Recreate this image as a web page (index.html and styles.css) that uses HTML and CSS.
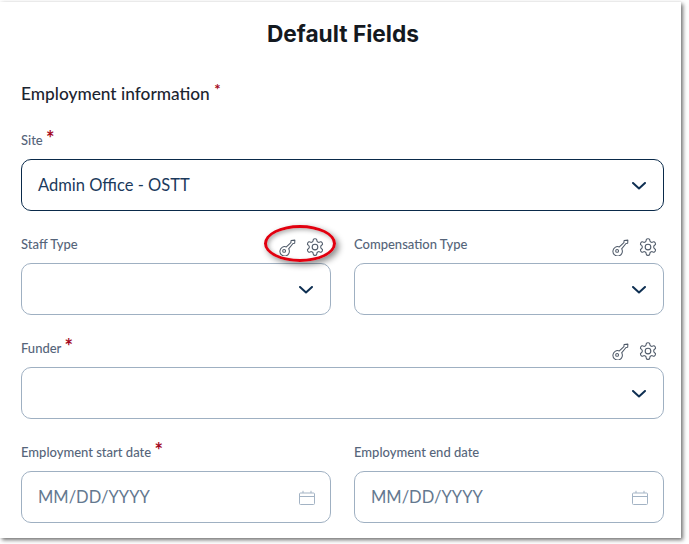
FILE: index.html
```html
<!DOCTYPE html>
<html lang="en">
<head>
    <meta charset="UTF-8">
    <meta name="viewport" content="width=device-width, initial-scale=1.0">
    <title>Default Fields</title>
    <link rel="stylesheet" href="styles.css">
</head>
<body>

<svg class="icon-defs" width="0" height="0">
    <symbol id="icon-key" viewBox="0 0 18 18">
        <path d="M7.8 8.4 12.6 3.8 12.8 1.6 16.8 1.2 16.6 4.6 14.8 4.8 10.2 10.4A5 5 0 1 1 7.8 8.4Z" fill="none" stroke="currentColor" stroke-width="1.1" stroke-linejoin="round"/>
        <circle cx="5.4" cy="12.6" r="1.5" fill="none" stroke="currentColor" stroke-width="1.1"/>
    </symbol>
    <symbol id="icon-gear" viewBox="0 0 24 24">
        <path d="M12.22 2h-.44a2 2 0 0 0-2 2v.18a2 2 0 0 1-1 1.73l-.43.25a2 2 0 0 1-2 0l-.15-.08a2 2 0 0 0-2.73.73l-.22.38a2 2 0 0 0 .73 2.73l.15.1a2 2 0 0 1 1 1.72v.51a2 2 0 0 1-1 1.74l-.15.09a2 2 0 0 0-.73 2.73l.22.38a2 2 0 0 0 2.73.73l.15-.08a2 2 0 0 1 2 0l.43.25a2 2 0 0 1 1 1.73V20a2 2 0 0 0 2 2h.44a2 2 0 0 0 2-2v-.18a2 2 0 0 1 1-1.73l.43-.25a2 2 0 0 1 2 0l.15.08a2 2 0 0 0 2.73-.73l.22-.39a2 2 0 0 0-.73-2.73l-.15-.08a2 2 0 0 1-1-1.74v-.5a2 2 0 0 1 1-1.74l.15-.09a2 2 0 0 0 .73-2.73l-.22-.38a2 2 0 0 0-2.73-.73l-.15.08a2 2 0 0 1-2 0l-.43-.25a2 2 0 0 1-1-1.73V4a2 2 0 0 0-2-2z" fill="none" stroke="currentColor" stroke-width="1.3"/>
        <circle cx="12" cy="12" r="3.4" fill="none" stroke="currentColor" stroke-width="1.3"/>
    </symbol>
    <symbol id="icon-chevron" viewBox="0 0 14 8">
        <path d="M1 1 7 6.5 13 1" fill="none" stroke="currentColor" stroke-width="2" stroke-linecap="round" stroke-linejoin="round"/>
    </symbol>
    <symbol id="icon-calendar" viewBox="0 0 16 15">
        <path d="M1.5 3h13a1 1 0 0 1 1 1v9.5a1 1 0 0 1-1 1h-13a1 1 0 0 1-1-1V4a1 1 0 0 1 1-1ZM.5 6.5h15M4 .8V3M12 .8V3" fill="none" stroke="currentColor" stroke-width="1"/>
    </symbol>
</svg>

<div class="sheet">
    <h1 class="page-title">Default Fields</h1>
    <h2 class="section-title">Employment information <span class="req req-small">*</span></h2>

    <div class="field-grid">
        <div class="field field-wide">
            <div class="field-head">
                <label class="field-label">Site <span class="req">*</span></label>
            </div>
            <div class="control control-active">
                <span class="control-value">Admin Office - OSTT</span>
                <svg class="chevron"><use href="#icon-chevron"/></svg>
            </div>
        </div>

        <div class="field">
            <div class="field-head">
                <label class="field-label">Staff Type</label>
                <div class="field-tools">
                    <svg class="tool"><use href="#icon-key"/></svg>
                    <svg class="tool tool-gear"><use href="#icon-gear"/></svg>
                    <div class="callout"></div>
                </div>
            </div>
            <div class="control">
                <svg class="chevron"><use href="#icon-chevron"/></svg>
            </div>
        </div>

        <div class="field">
            <div class="field-head">
                <label class="field-label">Compensation Type</label>
                <div class="field-tools">
                    <svg class="tool"><use href="#icon-key"/></svg>
                    <svg class="tool tool-gear"><use href="#icon-gear"/></svg>
                </div>
            </div>
            <div class="control">
                <svg class="chevron"><use href="#icon-chevron"/></svg>
            </div>
        </div>

        <div class="field field-wide">
            <div class="field-head">
                <label class="field-label">Funder <span class="req">*</span></label>
                <div class="field-tools">
                    <svg class="tool"><use href="#icon-key"/></svg>
                    <svg class="tool tool-gear"><use href="#icon-gear"/></svg>
                </div>
            </div>
            <div class="control">
                <svg class="chevron"><use href="#icon-chevron"/></svg>
            </div>
        </div>

        <div class="field">
            <div class="field-head">
                <label class="field-label">Employment start date <span class="req">*</span></label>
            </div>
            <div class="control">
                <span class="control-placeholder">MM/DD/YYYY</span>
                <svg class="calendar"><use href="#icon-calendar"/></svg>
            </div>
        </div>

        <div class="field">
            <div class="field-head">
                <label class="field-label">Employment end date</label>
            </div>
            <div class="control">
                <span class="control-placeholder">MM/DD/YYYY</span>
                <svg class="calendar"><use href="#icon-calendar"/></svg>
            </div>
        </div>
    </div>
</div>

</body>
</html>
```

FILE: styles.css
```css
html, body {
    margin: 0;
    padding: 0;
    background: #fff;
}
body {
    font-family: Lato, "Open Sans", sans-serif;
    height: 544px;
    overflow: hidden;
}
.icon-defs {
    position: absolute;
}
.sheet {
    box-sizing: border-box;
    width: 681px;
    height: 536px;
    margin-top: 2px;
    padding: 0 16px 0 21px;
    background: #fff;
    box-shadow: 2px 2px 4px rgba(0, 0, 0, 0.55), 0 0 3px rgba(0, 0, 0, 0.06);
}
.page-title {
    margin: 0;
    padding-top: 17px;
    font-family: Inter, sans-serif;
    font-size: 22.7px;
    line-height: 30px;
    font-weight: 700;
    text-align: center;
    color: #14191f;
}
.section-title {
    margin: 33px 0 0;
    font-size: 17.3px;
    line-height: 24px;
    font-weight: 500;
    color: #1c2530;
}
.req {
    position: relative;
    top: 1px;
    font-size: 20px;
    line-height: 0;
    font-weight: 700;
    color: #a4071d;
}
.req-small {
    font-size: 15px;
    top: -5px;
}
.field-grid {
    display: grid;
    grid-template-columns: 310px 310px;
    column-gap: 23px;
    row-gap: 24px;
    margin-top: 25px;
}
.field-wide {
    grid-column: 1 / 3;
}
.field-head {
    display: flex;
    align-items: center;
    justify-content: space-between;
    height: 20px;
    margin-bottom: 8px;
}
.field-label {
    margin-top: -2px;
    font-size: 13px;
    font-weight: 500;
    color: #56657a;
}
.field-tools {
    position: relative;
    display: flex;
    align-items: center;
    gap: 9px;
    margin-right: 6px;
    margin-top: 4px;
    color: #4f5a69;
}
.tool {
    width: 17px;
    height: 17px;
}
.tool-gear {
    width: 20px;
    height: 20px;
}
.callout {
    box-sizing: border-box;
    position: absolute;
    left: -15px;
    top: -12px;
    width: 72px;
    height: 37px;
    border: 3.5px solid #e1000f;
    border-radius: 50%;
    box-shadow: 3px 3px 6px rgba(0, 0, 0, 0.45), inset 2px 2px 4px rgba(0, 0, 0, 0.3);
}
.control {
    box-sizing: border-box;
    display: flex;
    align-items: center;
    justify-content: flex-end;
    height: 52px;
    padding: 0 17px 0 16px;
    background: #fff;
    border: 1px solid #9fb0c2;
    border-radius: 10px;
}
.control-active {
    border-color: #0a2a4a;
}
.control-value,
.control-placeholder {
    flex: 1;
    font-size: 16.5px;
}
.control-value {
    color: #1b3a5c;
}
.control-placeholder {
    color: #64788f;
}
.chevron {
    width: 14px;
    height: 8px;
    margin-top: 2px;
    color: #0e2f52;
}
.calendar {
    width: 16px;
    height: 15px;
    margin-right: -2px;
    color: #a3b3c4;
}
```
